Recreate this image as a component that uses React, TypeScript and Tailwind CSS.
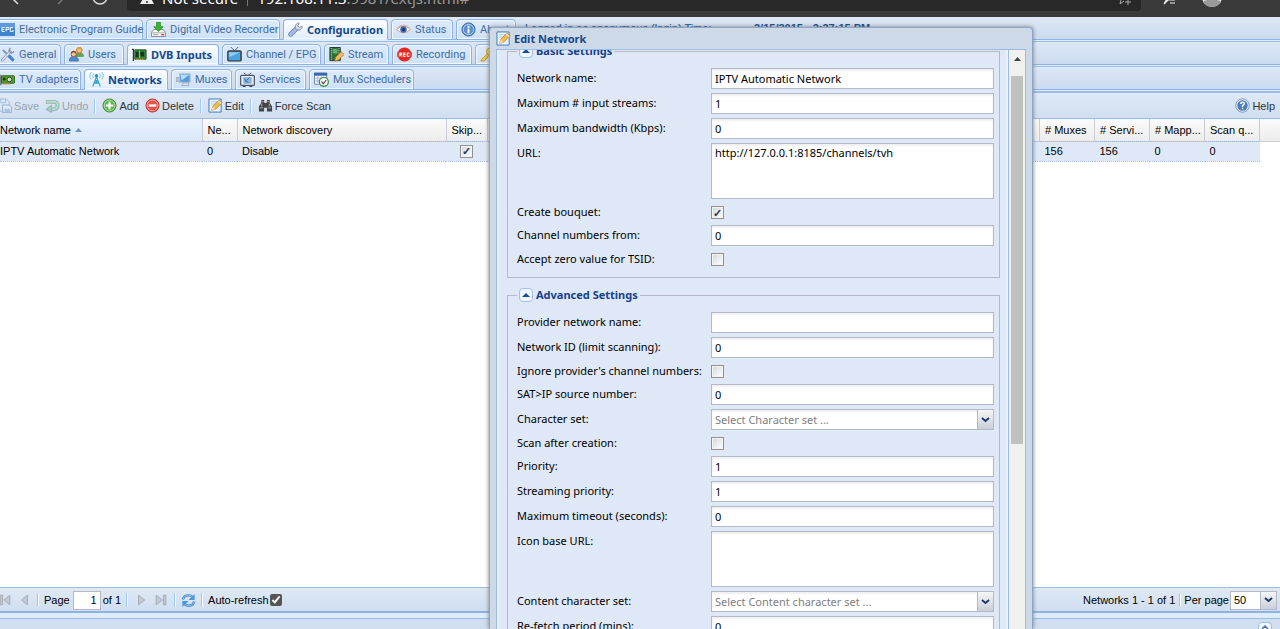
import React from 'react';

type TabItem = { label: string; icon: React.ReactNode; width: string; active?: boolean };

const Icon: React.FC<{ children: React.ReactNode; className?: string }> = ({ children, className = '' }) => (
    <svg viewBox="0 0 16 16" className={`w-[15px] h-[15px] shrink-0 ${className}`} fill="none">
        {children}
    </svg>
);

const EpgIcon = () => (
    <Icon>
        <rect y="1" width="16" height="14" rx="1" fill="#3f83cf" />
        <path d="M0 1h16v5H0z" fill="#5c9ae0" />
        <path d="M5 6H2v4h3M2 8h2.500M6.500 10V6h3v2h-3M14 6h-3v4h3V8.500" stroke="#fff" />
    </Icon>
);

const RecorderIcon = () => (
    <Icon>
        <path d="M3 8h10l2.500 3v4.500H.5V11z" fill="#f6f6f6" stroke="#8b8b8b" />
        <path d="M1 11.500h14" stroke="#aaa" />
        <path d="M6 0h4v5h3L8 10 3 5h3z" fill="#37b62d" stroke="#188416" strokeWidth=".7" />
        <path d="M2.500 13.500h5" stroke="#999" />
        <path d="M11 13.500h3" stroke="#d43a31" strokeWidth="1.500" />
    </Icon>
);

const WrenchIcon = () => (
    <Icon>
        <path d="M2.800 13.200 9 7" stroke="#5c76b5" strokeWidth="5" strokeLinecap="round" />
        <path d="M2.800 13.200 9 7" stroke="#a9bbe6" strokeWidth="3.400" strokeLinecap="round" />
        <path d="M10.500.8 7.800 3.500v3.200l1.800 1.800h3.200l2.500-2.700-.5-1.500-2.500 1.700-2-2L12 1.500z" fill="#d5dbe6" stroke="#7c879c" strokeWidth=".9" />
    </Icon>
);

const EyeIcon = () => (
    <Icon>
        <path d="M.5 8Q8 1 15.500 8 8 15 .5 8z" fill="#fff" stroke="#c79d78" />
        <circle cx="8" cy="8" r="3.500" fill="#3d69c2" />
        <circle cx="8" cy="8" r="1.600" fill="#132d68" />
        <path d="M1 6.500Q8 0 15 6.500" stroke="#dbb08b" />
    </Icon>
);

const InfoIcon = () => (
    <Icon>
        <circle cx="8" cy="8" r="7" fill="#5b8fcd" stroke="#386ba9" />
        <circle cx="8" cy="8" r="5.500" stroke="#b9d5f5" />
        <path d="M8 7v5M8 4v2" stroke="#fff" strokeWidth="2" />
    </Icon>
);

const ToolsIcon = () => (
    <Icon>
        <path d="m3 3 6 6" stroke="#8193ad" strokeWidth="2" />
        <path d="m9 9 4.500 4.500" stroke="#4683cd" strokeWidth="3.500" strokeLinecap="round" />
        <path d="M2.500 14 11 5" stroke="#8d9cb2" strokeWidth="3" strokeLinecap="round" />
        <path d="M2.500 14 11 5" stroke="#e4e9f2" strokeWidth="1.500" strokeLinecap="round" />
        <path d="m11 1-1.500 3L12 6.500l3-1.500" stroke="#8796ae" strokeWidth="1.500" />
    </Icon>
);

const UsersIcon = () => (
    <Icon>
        <path d="M7 10c0-3 2-4 4-4s4.500 1 4.500 4z" fill="#62a846" stroke="#44812f" strokeWidth=".6" />
        <circle cx="11" cy="3.500" r="3" fill="#f2bb79" stroke="#b77a31" />
        <path d="M8 3c0-4 6-4 6 0-2-1-4-1-6 0z" fill="#e4a426" />
        <path d="M.5 15c0-4 2-5 4.500-5s5 1 5 5z" fill="#4e8ad8" stroke="#2a5ba6" strokeWidth=".7" />
        <circle cx="5" cy="7.500" r="2.800" fill="#f3c19a" stroke="#9b592d" />
        <path d="M2 7c0-4 6-4 6 0-2-1.500-4-1.500-6 0z" fill="#8d4a24" />
    </Icon>
);

const CardIcon = () => (
    <Icon>
        <path d="M0 2.500h1.500V15" stroke="#333" strokeWidth="1.300" />
        <path d="M3 3h12v10H3z" fill="#39833e" stroke="#1f5524" />
        <path d="M4 5h3v6H4zM9 5h4v5H9z" fill="#173a1d" />
        <path d="M4 13h9" stroke="#e0b83b" strokeDasharray="1.500 .7" />
        <path d="M8 4v8" stroke="#8bc474" />
    </Icon>
);

const TvIcon = () => (
    <Icon>
        <path d="m4 0 4 4 4-4" stroke="#555" />
        <rect x=".7" y="4" width="14.600" height="11" rx="1" fill="#4b5a65" stroke="#35424c" />
        <path d="M2 5.500h12V14H2z" fill="#4aa5df" />
        <path d="M2 5.500h12L2 11z" fill="#8bcff4" />
    </Icon>
);

const StreamIcon = () => (
    <Icon>
        <path d="M1 .5h11v14H1z" fill="#2e6b3d" stroke="#1e3022" />
        <path d="M2.500 1v13M10.500 1v13" stroke="#d9e7db" strokeDasharray="1 1" />
        <path d="M4 2h5v5H4z" fill="#62b06c" />
        <path d="m6 15 1-4 6-6 3 3-6 6z" fill="#efbc5a" stroke="#a06b25" strokeWidth=".8" />
    </Icon>
);

const RecIcon = () => (
    <Icon>
        <circle cx="8" cy="8" r="7.500" fill="#e32920" />
        <path d="M0 5.500h16v5H0z" fill="#e9493e" />
        <path d="M3 10V6.500h2v1.500H3l2 2M9 6.500H7V10h2M7 8h2M13 6.500h-2V10h2" stroke="#fff" />
    </Icon>
);

const KeyIcon = () => (
    <Icon>
        <path d="m1 14 7-7 2 2-2 1v2H6v2l-2 1H1z" fill="#f3cb3e" stroke="#bb8a15" strokeWidth=".8" />
        <circle cx="11" cy="5" r="4" fill="#f7d750" stroke="#bb8a15" />
        <circle cx="12" cy="4" r="1.200" fill="#fff" />
    </Icon>
);

const AdapterIcon = () => (
    <Icon>
        <path d="M1 3v11" stroke="#333" />
        <rect x="1.500" y="4" width="14" height="8" rx="1" fill="#5c9c38" stroke="#2d5f1d" />
        <circle cx="10" cy="8" r="2.500" fill="#cde3b9" stroke="#244a19" />
        <path d="M3 6h3v3H3z" fill="#1f4219" />
        <path d="M3 12.800h8" stroke="#d4a52f" />
    </Icon>
);

const AntennaIcon = () => (
    <Icon>
        <path d="M8 5 4 15.500M8 5l4 10.500M6.500 9h3M5.500 12h5M6.500 9l4 3M9.500 9l-4 3" stroke="#36a3cb" strokeWidth="1.200" />
        <circle cx="8" cy="4" r="1.800" fill="#2a8dbb" />
        <path d="M4.800 1.500q-2 2.500 0 5M11.200 1.500q2 2.500 0 5M2.500 0q-3.500 4 0 8M13.500 0q3.500 4 0 8" stroke="#64bfe4" />
    </Icon>
);

const MuxIcon = () => (
    <Icon>
        <path d="M0 6h6v4H0z" fill="#b8c7d6" stroke="#8a9cb0" strokeWidth=".7" />
        <path d="M4 2h11v9H4z" fill="#4f9ce0" stroke="#aebfcd" strokeWidth="1.300" />
        <path d="M5 3h9L6 9z" fill="#b4dcfa" />
        <path d="M6 14.500h8l-1-3H8z" fill="#d6dfe7" stroke="#8c9bac" strokeWidth=".7" />
    </Icon>
);

const ServiceIcon = () => (
    <Icon>
        <path d="m4 1 4 3 4-3" stroke="#555" />
        <rect x=".7" y="3.700" width="14.600" height="10.500" rx="1" fill="#e6ebf2" stroke="#4a5968" strokeWidth="1.300" />
        <rect x="3.500" y="5.500" width="9" height="7" fill="#8fb3dc" />
        <path d="M5 7q0 4 4 4M7 9l3-3" stroke="#2d66a8" />
        <path d="M3 15.500h3M10 15.500h3" stroke="#333" />
    </Icon>
);

const SchedulerIcon = () => (
    <Icon>
        <path d="M.5 1h13v12H.5z" fill="#fff" stroke="#6981ad" />
        <path d="M0 1h14v3H0z" fill="#3868b0" />
        <path d="M1 6.500h12M1 9.500h6M4 4v8M8 4v4" stroke="#9fb3d1" />
        <circle cx="10.500" cy="10.500" r="4.800" fill="#fff" stroke="#3c9146" strokeWidth="1.400" />
        <path d="m8 10 2 2.500 3-4" stroke="#444" strokeWidth="1.200" />
    </Icon>
);

const EditIcon = () => (
    <Icon>
        <path d="M1 1h13v14H1z" fill="#e9f5ff" stroke="#3877b8" />
        <path d="M3 4h8M3 6.500h6" stroke="#a4c9e8" />
        <path d="m4 13 1-4 7-7 3 3-7 7z" fill="#f3bd43" stroke="#b37b22" strokeWidth=".8" />
        <path d="m4 13 1-4 3 3z" fill="#f8e0ba" />
        <path d="m11 3 3 3" stroke="#d8e0e8" strokeWidth="1.500" />
    </Icon>
);

const SaveIcon = () => (
    <Icon className="opacity-50">
        <path d="M1 1h9l3 3v10H1z" fill="#dbe9f7" stroke="#6796c6" />
        <path d="M4 1v4h5V1" stroke="#6796c6" />
        <path d="M6 7.500h7l2.500 2v6H6z" fill="#e9f2fb" stroke="#4a7ab0" />
        <path d="M8 11.500h6v4H8z" fill="#7ba6d6" />
    </Icon>
);

const UndoIcon = () => (
    <Icon className="opacity-60">
        <path d="M1 4h8q4.500 0 4.500 4T9 12H6" stroke="#5f9a7d" strokeWidth="4" />
        <path d="M1.500 4H9q4.500 0 4.500 4T9 12H6" stroke="#a5d3bc" strokeWidth="2.200" />
        <path d="M7 7.500v8L1 12z" fill="#8ec0a6" stroke="#5f9a7d" />
    </Icon>
);

const AddIcon = () => (
    <Icon>
        <circle cx="8" cy="8" r="7" fill="#5fb551" stroke="#3f8b38" />
        <circle cx="8" cy="8" r="5.700" stroke="#b3dfa9" />
        <path d="M8 4v8M4 8h8" stroke="#fff" strokeWidth="2.200" />
    </Icon>
);

const DeleteIcon = () => (
    <Icon>
        <circle cx="8" cy="8" r="7" fill="#e4544a" stroke="#b73731" />
        <circle cx="8" cy="8" r="5.700" stroke="#f3aaa2" />
        <path d="M4 8h8" stroke="#fff" strokeWidth="2.500" />
    </Icon>
);

const BinocularsIcon = () => (
    <Icon>
        <path d="M3.500 2h3v3h3V2h3v3L15 9v5.500H9.500v-4h-3v4H1V9l2.500-4z" fill="#444" />
        <path d="M2 10.500h3.500M10.500 10.500H14M4 4h2M10 4h2M4 6v3M12 6v3" stroke="#aab2bb" />
    </Icon>
);

const HelpIcon = () => (
    <Icon>
        <circle cx="8" cy="8" r="7.200" fill="#dce8f5" stroke="#7d9cc4" />
        <circle cx="8" cy="8" r="5.500" fill="#4d7dbb" />
        <path d="M6 6.500q0-2 2-2t2 1.700Q10 7.300 8 8.200v1.300M8 10.500V12" stroke="#fff" strokeWidth="1.400" />
    </Icon>
);

const RefreshIcon = () => (
    <Icon>
        <path d="M2 7q1-4.500 6-4.500 3 0 4.500 2M14 9q-1 4.500-6 4.500-3 0-4.500-2" stroke="#3b83d0" strokeWidth="2.600" />
        <path d="M2 7q1-4.500 6-4.500 3 0 4.500 2M14 9q-1 4.500-6 4.500-3 0-4.500-2" stroke="#9fd0f7" />
        <path d="M14.500 1v6.500H8zM1.500 15V8.500H8z" fill="#4b95de" />
    </Icon>
);

const PageArrow: React.FC<{ d: string; label: string }> = ({ d, label }) => (
    <button type="button" aria-label={label} disabled className="flex w-4 justify-center">
        <svg viewBox="0 0 10 10" className="h-3 w-3">
            <path d={d} fill="#c3cad3" stroke="#a3aab4" strokeWidth=".8" />
        </svg>
    </button>
);

const Chevron = () => (
    <span className="pointer-events-none flex w-[17px] shrink-0 items-center justify-center border border-[#b5b8c8] bg-linear-to-b from-[#f6f6f6] to-[#c9cfd9]">
        <svg viewBox="0 0 9 6" className="h-[6px] w-[9px]" fill="none">
            <path d="m1 1 3.500 3L8 1" stroke="#1d3a66" strokeWidth="2" />
        </svg>
    </span>
);

const mainTabs: TabItem[] = [
    { label: 'Electronic Program Guide', icon: <EpgIcon />, width: 'w-[148px]' },
    { label: 'Digital Video Recorder', icon: <RecorderIcon />, width: 'w-[134px]' },
    { label: 'Configuration', icon: <WrenchIcon />, width: 'w-[105px]', active: true },
    { label: 'Status', icon: <EyeIcon />, width: 'w-[62px]' },
    { label: 'About', icon: <InfoIcon />, width: 'w-[60px]' },
];

const configTabs: TabItem[] = [
    { label: 'General', icon: <ToolsIcon />, width: 'w-[66px]' },
    { label: 'Users', icon: <UsersIcon />, width: 'w-[60px]' },
    { label: 'DVB Inputs', icon: <CardIcon />, width: 'w-[92px]', active: true },
    { label: 'Channel / EPG', icon: <TvIcon />, width: 'w-[99px]' },
    { label: 'Stream', icon: <StreamIcon />, width: 'w-[65px]' },
    { label: 'Recording', icon: <RecIcon />, width: 'w-[80px]' },
    { label: 'CAs', icon: <KeyIcon />, width: 'w-[50px]' },
];

const dvbTabs: TabItem[] = [
    { label: 'TV adapters', icon: <AdapterIcon />, width: 'w-[86px]' },
    { label: 'Networks', icon: <AntennaIcon />, width: 'w-[84px]', active: true },
    { label: 'Muxes', icon: <MuxIcon />, width: 'w-[61px]' },
    { label: 'Services', icon: <ServiceIcon />, width: 'w-[71px]' },
    { label: 'Mux Schedulers', icon: <SchedulerIcon />, width: 'w-[105px]' },
];

const TabBar: React.FC<{ items: TabItem[]; label: string; children?: React.ReactNode }> = ({ items, label, children }) => (
    <div className="h-[25px] shrink-0 border-b border-[#99bce8] bg-[#deecfd]">
        <nav aria-label={label} className="flex h-[23px] items-end gap-[3px] border-b border-[#8db2e3] bg-linear-to-b from-[#dde8f5] to-[#cbdbef] pr-4">
            {items.map((tab) => (
                <button
                    key={tab.label}
                    type="button"
                    className={`-mb-px flex h-[21px] shrink-0 items-center gap-1 whitespace-nowrap rounded-t border border-[#8db2e3] pl-1 first:-ml-[5px] shadow-[inset_0_0_0_1px_#f2f8ff] ${tab.width} ${
                        tab.active
                            ? "border-b-[#deecfd] bg-linear-to-b from-white to-[#deecfd] font-['Noto_Sans',sans-serif] font-bold text-[#15498b]"
                            : "bg-linear-to-b from-[#dceafb] to-[#cfe1f7] font-[Roboto,sans-serif] text-[#416da3]"
                    }`}
                >
                    {tab.icon}
                    {tab.label}
                </button>
            ))}
            {children}
        </nav>
    </div>
);

const ToolButton: React.FC<{ label: string; icon: React.ReactNode; disabled?: boolean }> = ({ label, icon, disabled }) => (
    <button type="button" disabled={disabled} className="flex items-center gap-[2px] whitespace-nowrap text-[#333] disabled:text-[#9aa3b0]">
        {icon}
        {label}
    </button>
);

const Separator = () => <span className="h-[14px] w-[2px] shrink-0 border-l border-r border-l-[#98c8ff] border-r-white" />;

const checkStyle =
    "m-0 h-[13px] w-[13px] shrink-0 appearance-none border border-[#8f9194] bg-linear-to-br from-[#d4d8dc] to-white shadow-[inset_0_0_0_1px_#f4f4f4] grid place-items-center text-[11px] leading-none font-bold text-[#2b3d63] checked:before:content-['✓']";

const columns = [
    { title: 'Network name', value: 'IPTV Automatic Network', width: 'w-[202px]' },
    { title: 'Ne...', value: '0', width: 'w-[35px]' },
    { title: 'Network discovery', value: 'Disable', width: 'w-[209px]' },
    { title: 'Skip...', value: 'check', width: 'w-[41px]' },
    { title: '', value: '', width: '' },
    { title: '# Muxes', value: '156', width: 'w-[55px]' },
    { title: '# Servi...', value: '156', width: 'w-[55px]' },
    { title: '# Mapp...', value: '0', width: 'w-[55px]' },
    { title: 'Scan q...', value: '0', width: 'w-[55px]' },
];

const NetworkGrid = () => (
    <div className="min-h-0 grow bg-white">
        <div className="h-[23px] border-b border-[#d0d0d0] bg-linear-to-b from-[#fbfbfb] to-[#ececec]">
            <table className="w-[calc(100%-20px)] table-fixed border-collapse">
                <thead>
                    <tr className="h-[22px]">
                        {columns.map((col, i) => (
                            <th
                                key={col.title}
                                className={`overflow-hidden whitespace-nowrap border-r border-[#c8ccd2] p-0 text-left font-normal ${col.width} ${
                                    i === 0 ? 'bg-linear-to-b from-[#ebf3fd] to-[#d9e8fb]' : 'pl-[5px]'
                                }`}
                            >
                                {col.title}
                                {i === 0 && (
                                    <svg viewBox="0 0 7 4" className="mb-px ml-1 inline h-1 w-[7px]">
                                        <path d="M0 4 3.500 0 7 4z" fill="#6d94c4" />
                                    </svg>
                                )}
                            </th>
                        ))}
                    </tr>
                </thead>
                <tbody>
                    <tr className="h-[20px] border-y border-dotted border-[#a3bae9] bg-[#dfe8f6]">
                        {columns.map((col, i) => (
                            <td key={col.title} className={`overflow-hidden whitespace-nowrap p-0 ${i > 0 ? 'pl-[5px]' : ''}`}>
                                {col.value === 'check' ? (
                                    <input type="checkbox" defaultChecked aria-label="Skip initial scan" className={`ml-[9px] ${checkStyle}`} />
                                ) : (
                                    col.value
                                )}
                            </td>
                        ))}
                    </tr>
                </tbody>
            </table>
        </div>
    </div>
);

type Field = { label: string; kind: 'text' | 'area' | 'check' | 'select'; value?: string; checked?: boolean };

const basicFields: Field[] = [
    { label: 'Network name', kind: 'text', value: 'IPTV Automatic Network' },
    { label: 'Maximum # input streams', kind: 'text', value: '1' },
    { label: 'Maximum bandwidth (Kbps)', kind: 'text', value: '0' },
    { label: 'URL', kind: 'area', value: 'http://127.0.0.1:8185/channels/tvh' },
    { label: 'Create bouquet', kind: 'check', checked: true },
    { label: 'Channel numbers from', kind: 'text', value: '0' },
    { label: 'Accept zero value for TSID', kind: 'check' },
];

const advancedFields: Field[] = [
    { label: 'Provider network name', kind: 'text', value: '' },
    { label: 'Network ID (limit scanning)', kind: 'text', value: '0' },
    { label: "Ignore provider's channel numbers", kind: 'check' },
    { label: 'SAT>IP source number', kind: 'text', value: '0' },
    { label: 'Character set', kind: 'select', value: 'Select Character set ...' },
    { label: 'Scan after creation', kind: 'check' },
    { label: 'Priority', kind: 'text', value: '1' },
    { label: 'Streaming priority', kind: 'text', value: '1' },
    { label: 'Maximum timeout (seconds)', kind: 'text', value: '0' },
    { label: 'Icon base URL', kind: 'area', value: '' },
    { label: 'Content character set', kind: 'select', value: 'Select Content character set ...' },
    { label: 'Re-fetch period (mins)', kind: 'text', value: '0' },
];

const boxStyle = 'w-full min-w-0 border border-[#b5b8c8] bg-white px-[3px] shadow-[inset_0_2px_2px_#f0f0f0] outline-none';

const FieldRow: React.FC<{ field: Field }> = ({ field }) => {
    const id = field.label.toLowerCase().replace(/[^a-z]+/g, '-');
    return (
        <div className={`flex ${field.kind === 'check' ? 'h-[18px] items-center' : 'items-start'}`}>
            <label htmlFor={id} className={`w-[194px] shrink-0 whitespace-nowrap ${field.kind === 'check' ? '' : 'leading-[19px]'}`}>
                {field.label}:
            </label>
            {field.kind === 'text' && <input id={id} type="text" defaultValue={field.value} className={`h-[21px] ${boxStyle}`} />}
            {field.kind === 'area' && <textarea id={id} defaultValue={field.value} className={`block h-[56px] resize-none leading-[17px] ${boxStyle}`} />}
            {field.kind === 'check' && <input id={id} type="checkbox" defaultChecked={field.checked} className={checkStyle} />}
            {field.kind === 'select' && (
                <div className="flex h-[21px] w-full">
                    <select id={id} className={`appearance-none border-r-0 text-[#808080] ${boxStyle}`}>
                        <option>{field.value}</option>
                    </select>
                    <Chevron />
                </div>
            )}
        </div>
    );
};

const FieldGroup: React.FC<{ title: string; fields: Field[] }> = ({ title, fields }) => (
    <fieldset className="min-w-0 border border-[#b5b8c8] px-[5px] pb-[9px] pl-[9px]">
        <legend className="flex h-[16px] items-center gap-[3px] px-[2px] font-bold text-[#15428b]">
            <button type="button" aria-label={`Collapse ${title}`} className="flex h-[14px] w-[14px] items-center justify-center rounded-sm border border-[#9fc0e8] bg-[#eef5fd]">
                <svg viewBox="0 0 8 4" className="h-1 w-2">
                    <path d="M0 4 4 0l4 4z" fill="#1f4b94" />
                </svg>
            </button>
            {title}
        </legend>
        <div className="mt-[9px] flex flex-col gap-1">
            {fields.map((field) => (
                <FieldRow key={field.label} field={field} />
            ))}
        </div>
    </fieldset>
);

const EditDialog = () => (
    <section
        role="dialog"
        aria-label="Edit Network"
        className="absolute bottom-0 left-[489px] top-[27px] flex w-[544px] flex-col rounded-t border border-b-0 border-[#8ba5c9] bg-[#ced9e7] px-[6px] font-['Noto_Sans',sans-serif] text-[11px] shadow-[0_0_4px_#777]"
    >
        <h2 className="flex h-[21px] shrink-0 items-center gap-[3px] font-bold text-[#15498b]">
            <EditIcon />
            Edit Network
        </h2>
        <div className="flex min-h-0 grow border border-b-0 border-[#99bce8] bg-[#dfe8f6]">
            <div className="flex min-w-0 grow flex-col justify-start gap-[9px] overflow-hidden border-x-2 border-[#eaf2fd] pl-2 pr-[6px]">
                <div className="-mt-[7px]">
                    <FieldGroup title="Basic Settings" fields={basicFields} />
                </div>
                <FieldGroup title="Advanced Settings" fields={advancedFields} />
            </div>
            <div className="flex w-[17px] shrink-0 flex-col items-center border-l border-[#99bce8] bg-[#f0f1ee]">
                <svg viewBox="0 0 7 4" className="mb-[15px] mt-[7px] h-1 w-[7px] shrink-0">
                    <path d="M0 4 3.500 0 7 4z" fill="#444" />
                </svg>
                <div className="h-[368px] w-3 shrink-0 bg-[#c0c1be]" />
            </div>
        </div>
    </section>
);

const BrowserBar = () => (
    <header className="flex h-[17px] shrink-0 items-end overflow-hidden bg-[#3a3a3a] font-['Noto_Sans',sans-serif] text-[15px] text-white">
        <div className="flex h-[30px] w-[127px] shrink-0 items-center">
            <svg viewBox="0 0 127 30" className="h-[30px] w-[127px]" fill="none" stroke="#ddd" strokeWidth="1.500">
                <path d="m19 6-6 6 5 5" />
                <path d="m57 6 6 6-5 5" stroke="#777" />
                <circle cx="100" cy="10" r="7" />
            </svg>
        </div>
        <div className="mb-[6px] flex h-[27px] grow items-center rounded-b bg-[#282828] pl-[13px] leading-[22px]">
            <svg viewBox="0 0 14 14" className="mr-[8px] h-[14px] w-[14px]">
                <path d="M7 0 14 13H0z" fill="#eee" />
                <path d="M7 5v4M7 10v2" stroke="#282828" strokeWidth="1.500" />
            </svg>
            Not secure
            <span className="mx-[9px] h-4 w-px bg-[#777]" />
            192.168.11.3
            <span className="text-[#999]">:9981/extjs.html#</span>
            <svg viewBox="0 0 14 14" className="ml-auto mr-[10px] h-[14px] w-[14px]" fill="none" stroke="#aaa">
                <path d="m7 1 2 4 4 .5-3 3M7 10l-4 3 1-4-3-3.500L5 5l2-4M11 8v6M8 11h6" />
            </svg>
        </div>
        <div className="flex h-[30px] w-[139px] shrink-0 items-start pl-[20px]">
            <svg viewBox="0 0 14 18" className="h-[18px] w-[14px]" fill="none" stroke="#eee">
                <path d="m5 2 2 8-4 7 5-5M7 13h7M9 16h5" strokeWidth="1.200" />
            </svg>
            <svg viewBox="0 0 22 22" className="ml-[26px] h-[22px] w-[22px]">
                <circle cx="11" cy="10" r="10" fill="#ddd" />
                <path d="M2 15q9-6 18 0-3 5-9 5t-9-5z" fill="#999" />
            </svg>
        </div>
    </header>
);

const App: React.FC = () => (
    <div className="relative flex h-screen flex-col overflow-hidden bg-[#dfe8f6] font-['Liberation_Sans',Arial,sans-serif] text-[11px] leading-[14px] text-black">
        <BrowserBar />
        <TabBar items={mainTabs} label="Main">
            <span className="ml-[6px] w-[226px] shrink-0 whitespace-nowrap pb-1 text-[#15498b]">Logged in as anonymous (login) Time:</span>
            <span className="whitespace-nowrap pb-1 font-bold text-[#15498b]">2/15/2015 - 2:27:15 PM</span>
        </TabBar>
        <TabBar items={configTabs} label="Configuration" />
        <TabBar items={dvbTabs} label="DVB Inputs" />
        <div className="-ml-[3px] flex h-[27px] shrink-0 items-center gap-[6px] border-b border-t border-[#99bce8] bg-linear-to-b from-[#dfe9f5] to-[#d0def0] pr-[5px]">
            <ToolButton label="Save" icon={<SaveIcon />} disabled />
            <ToolButton label="Undo" icon={<UndoIcon />} disabled />
            <Separator />
            <ToolButton label="Add" icon={<AddIcon />} />
            <ToolButton label="Delete" icon={<DeleteIcon />} />
            <Separator />
            <ToolButton label="Edit" icon={<EditIcon />} />
            <Separator />
            <ToolButton label="Force Scan" icon={<BinocularsIcon />} />
            <span className="grow" />
            <ToolButton label="Help" icon={<HelpIcon />} />
        </div>
        <NetworkGrid />
        <footer className="flex h-[26px] shrink-0 items-center border-b-2 border-t border-b-[#8db2e3] border-t-[#99bce8] bg-linear-to-b from-[#dfe9f5] to-[#d0def0] pr-[3px] pt-px">
            <div className="-ml-[3px] flex items-center gap-1">
                <PageArrow label="First page" d="M1 1h2v8H1zM9 1v8L4 5z" />
                <PageArrow label="Previous page" d="M7 1v8L2 5z" />
                <Separator />
            </div>
            <label htmlFor="page" className="ml-[5px] mr-[3px]">Page</label>
            <input id="page" type="text" defaultValue="1" className="h-[19px] w-[28px] border border-[#b5b8c8] bg-white pr-[3px] text-right" />
            <span className="ml-[2px] mr-[5px]">of 1</span>
            <Separator />
            <div className="mx-[5px] flex gap-1">
                <PageArrow label="Next page" d="M3 1v8l5-4z" />
                <PageArrow label="Last page" d="M1 1v8l5-4zM7 1h2v8H7z" />
            </div>
            <Separator />
            <button type="button" aria-label="Refresh" className="mx-[5px]"><RefreshIcon /></button>
            <Separator />
            <label htmlFor="auto" className="ml-[5px] mr-px">Auto-refresh</label>
            <input id="auto" type="checkbox" defaultChecked className="h-3 w-3 accent-[#555]" />
            <span className="ml-auto mr-[4px]">Networks 1 - 1 of 1</span>
            <Separator />
            <label htmlFor="per-page" className="ml-[3px] mr-px">Per page</label>
            <div className="flex h-[19px]">
                <select id="per-page" className="w-[30px] appearance-none border border-r-0 border-[#b5b8c8] bg-white pl-[3px]">
                    <option>50</option>
                </select>
                <Chevron />
            </div>
        </footer>
        <div className="flex h-[16px] shrink-0 flex-col bg-[#deecfd] pt-[5px]">
            <div className="flex grow justify-end overflow-hidden border-t border-[#99bce8] bg-[#d0def0] pr-[8px] pt-[3px]">
                <button type="button" aria-label="Expand log" className="flex h-[14px] w-[14px] items-start justify-center rounded-sm border border-[#9fc0e8] bg-[#eef5fd] pt-[2px]">
                    <svg viewBox="0 0 8 5" className="h-[5px] w-2" fill="none">
                        <path d="m1 4 3-3 3 3" stroke="#4e75ad" strokeWidth="1.500" />
                    </svg>
                </button>
            </div>
        </div>
        <EditDialog />
    </div>
);

export default App;
